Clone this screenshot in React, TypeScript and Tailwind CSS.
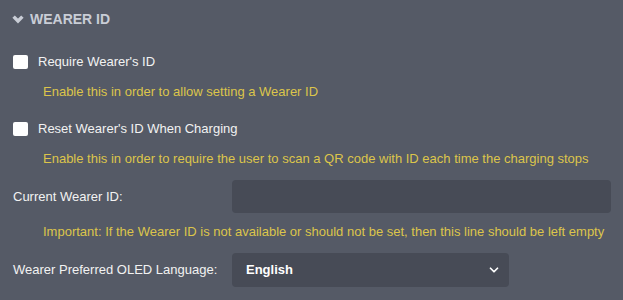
import { ChevronDown } from 'lucide-react';

function Check({ label, hint }: { label: string; hint: string }) {
  return (
    <div>
      <label className="flex items-center gap-[10px] pl-[13px] h-[16px]">
        <span className="w-[15px] h-[14px] bg-white rounded-[2px] shrink-0" />
        <span className="text-[13px] text-[#f2f2f2]">{label}</span>
      </label>
      <p className="pl-[43px] mt-[12px] text-[13px] leading-[20px] text-[#dcc54b]">{hint}</p>
    </div>
  );
}

export default function App() {
  return (
    <div
      className="w-[623px] h-[300px] bg-[#555a66] overflow-hidden"
      style={{ fontFamily: '"Liberation Sans", Arial, sans-serif' }}
    >
      <div className="flex items-center gap-[6px] pl-[12px] pt-[10px] h-[28px]">
        <svg width="12" height="9" viewBox="0 0 12 9" className="text-[#c9cdd6]">
          <path d="M1.6 1.6 L6 6 L10.4 1.6" stroke="currentColor" strokeWidth="3.4" fill="none" />
        </svg>
        <span className="text-[14px] font-bold text-[#c9cdd6]">WEARER ID</span>
      </div>

      <div className="mt-[26px] flex flex-col gap-[19px]">
        <Check label="Require Wearer's ID" hint="Enable this in order to allow setting a Wearer ID" />
        <Check
          label="Reset Wearer's ID When Charging"
          hint="Enable this in order to require the user to scan a QR code with ID each time the charging stops"
        />
      </div>

      <div className="mt-[11px] flex items-center h-[33px]">
        <span className="w-[232px] pl-[13px] text-[13px] text-[#f2f2f2]">Current Wearer ID:</span>
        <input className="w-[379px] h-[33px] bg-[#474b56] rounded-[4px] outline-none" />
      </div>
      <p className="pl-[43px] mt-[9px] text-[13px] leading-[20px] text-[#dcc54b]">
        Important: If the Wearer ID is not available or should not be set, then this line should be left empty
      </p>

      <div className="mt-[11px] flex items-center h-[34px]">
        <span className="w-[232px] pl-[13px] text-[13px] text-[#f2f2f2]">Wearer Preferred OLED Language:</span>
        <div className="w-[277px] h-[34px] bg-[#474b56] rounded-[4px] flex items-center justify-between pl-[14px] pr-[8px]">
          <span className="text-[13px] font-bold text-white">English</span>
          <ChevronDown size={14} strokeWidth={3} className="text-white" />
        </div>
      </div>
    </div>
  );
}
